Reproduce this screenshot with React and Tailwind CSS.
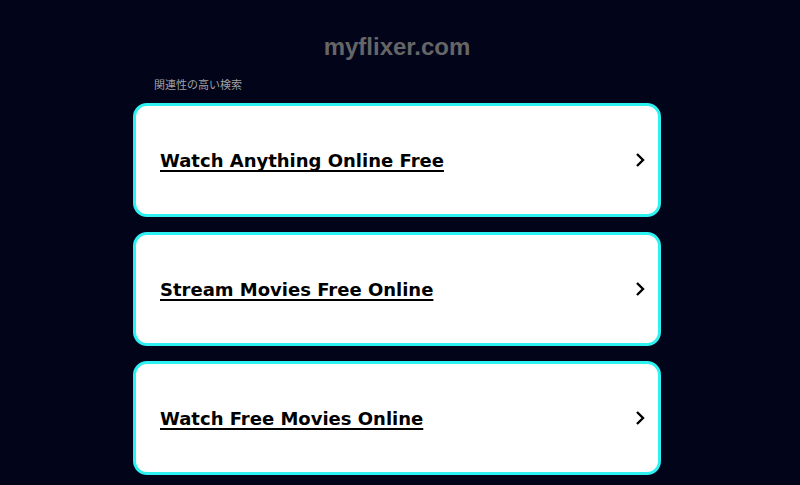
const LINKS = ['Watch Anything Online Free', 'Stream Movies Free Online', 'Watch Free Movies Online']

function Chevron() {
  return (
    <svg className="w-[10px] h-[16px] shrink-0" viewBox="0 0 10 16" fill="none" stroke="#000" strokeWidth={2.4}>
      <path d="M2 2l6 6-6 6" />
    </svg>
  )
}

export default function App() {
  return (
    <div className="min-h-[485px] bg-[#02041a] flex justify-center pr-[6px] font-['Liberation_Sans',Arial,sans-serif]">
      <div className="w-[528px] flex flex-col">
        <h1 className="mt-[33px] text-center text-[24px] leading-[28px] font-bold text-[#666]">myflixer.com</h1>
        <p className="mt-[16px] pl-[21px] text-[11px] leading-[14px] text-[#a0a0a0] font-['Noto_Sans_CJK_JP',sans-serif]">
          関連性の高い検索
        </p>
        <div className="mt-[12px] flex flex-col gap-[15px]">
          {LINKS.map((t) => (
            <a
              key={t}
              href="#"
              className="h-[114px] flex items-center justify-between pl-[24px] pr-[13px] bg-white border-[3.5px] border-[#2ef2f2] rounded-[14px]"
            >
              <span className="text-[18px] font-bold text-black underline underline-offset-[3px] decoration-[2px] [text-decoration-skip-ink:none] font-['DejaVu_Sans',Verdana,sans-serif]">
                {t}
              </span>
              <Chevron />
            </a>
          ))}
        </div>
      </div>
    </div>
  )
}
